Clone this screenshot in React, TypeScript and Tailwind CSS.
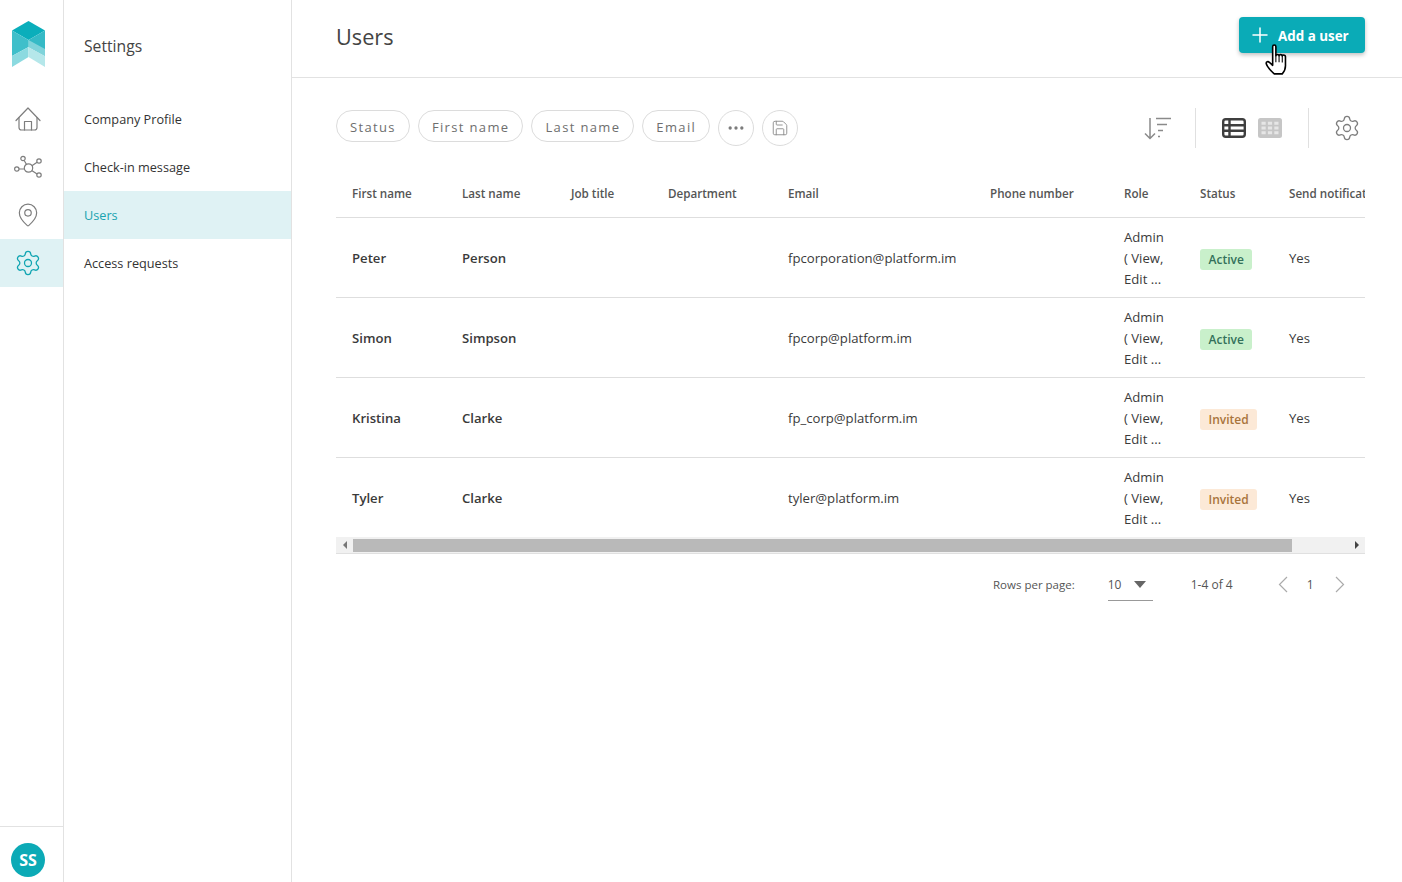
import React from "react";
import { MapPin, Settings, Save, Plus, MoreHorizontal } from "lucide-react";

const columns = [
  { label: "First name", width: "w-[110px]" },
  { label: "Last name", width: "w-[109px]" },
  { label: "Job title", width: "w-[97px]" },
  { label: "Department", width: "w-[120px]" },
  { label: "Email", width: "w-[202px]" },
  { label: "Phone number", width: "w-[134px]" },
  { label: "Role", width: "w-[76px]" },
  { label: "Status", width: "w-[89px]" },
  { label: "Send notification", width: "w-[160px]" },
];

const users = [
  { first: "Peter", last: "Person", email: "fpcorporation@platform.im", status: "Active" },
  { first: "Simon", last: "Simpson", email: "fpcorp@platform.im", status: "Active" },
  { first: "Kristina", last: "Clarke", email: "fp_corp@platform.im", status: "Invited" },
  { first: "Tyler", last: "Clarke", email: "tyler@platform.im", status: "Invited" },
];

const settingsLinks = ["Company Profile", "Check-in message", "Users", "Access requests"];
const filters = ["Status", "First name", "Last name", "Email"];

const Logo = () => (
  <svg width="34" height="47" viewBox="0 0 34 47" className="block">
    <polygon points="16.5,0 33,9.5 16.5,19 0,9.5" fill="#0aaebb" />
    <polygon points="0,9.5 16.5,19 16.5,26 0,35" fill="#3fbfca" />
    <polygon points="33,9.500 16.5,19 16.5,26 33,35" fill="#35bac6" />
    <polygon points="0,35 16.5,26 16.5,36 0,46" fill="#8cdae0" />
    <polygon points="16.5,19 33,28 33,35 16.5,26" fill="#7fd3da" />
    <polygon points="16.5,26 33,35 33,46 16.5,36" fill="#b5e7ea" />
  </svg>
);

const HomeIcon = () => (
  <svg width="26" height="24" viewBox="0 0 26 24" fill="none" stroke="#7d7d7d" strokeWidth="1.2" strokeLinejoin="round" strokeLinecap="round">
    <path d="M1 13.500L13 1l12 12.500" />
    <path d="M4 10.500V20.500a2.500 2.500 0 0 0 2.500 2.500h13a2.500 2.500 0 0 0 2.500-2.500V10.500" />
    <path d="M9.500 23v-8.500h7V23" />
  </svg>
);

const NetworkIcon = () => (
  <svg width="30" height="26" viewBox="0 0 30 26" fill="none" stroke="#7d7d7d" strokeWidth="1.2">
    <circle cx="14.5" cy="13" r="4.2" />
    <circle cx="9" cy="3.500" r="2.200" />
    <circle cx="25" cy="6" r="2.200" />
    <circle cx="2.800" cy="14" r="2.200" />
    <circle cx="25" cy="20" r="2.200" />
    <path d="M10.200 5.500l2.200 3.800M23.100 7.200l-5.200 3.600M5 14h5.300M23.100 19l-5.400-3.600" />
  </svg>
);

const SortIcon = () => (
  <svg width="28" height="23" viewBox="0 0 28 23" fill="none" stroke="#8a8a8a" strokeWidth="1.5">
    <path d="M6 1v20.500M1 16.500L6 21.500l5-5" />
    <path d="M12 1.500h15M13 7.500h10M14 13.500h5M14 19.500h2" />
  </svg>
);

const TableIcon = () => (
  <svg width="24" height="20" viewBox="0 0 24 20" fill="none" stroke="#3f3f3f" strokeWidth="2.400">
    <rect x="1.200" y="1.200" width="21.600" height="17.600" rx="2.500" />
    <path d="M1.200 7.300h21.600M1.200 12.800h21.600M7.500 1.200v17.600" />
  </svg>
);

const GridIcon = () => (
  <svg width="24" height="20" viewBox="0 0 24 20" fill="none">
    <rect width="24" height="20" rx="2.500" fill="#c6c6c6" />
    <path d="M3.500 5.200h4.200M9.900 5.200h4.200M16.300 5.200h4.200M3.500 10h4.200M9.900 10h4.200M16.300 10h4.200M3.500 14.800h4.200M9.900 14.800h4.200M16.300 14.800h4.200" stroke="#e6e6e6" strokeWidth="3" />
  </svg>
);

const Chevron = ({ dir }: { dir: "left" | "right" }) => (
  <svg width="10" height="17" viewBox="0 0 10 17" fill="none" stroke="#ababab" strokeWidth="1.200">
    <path d={dir === "left" ? "M9 1L1.500 8.500 9 16" : "M1 1l7.500 7.500L1 16"} />
  </svg>
);

const HandCursor = () => (
  <svg width="26" height="32" viewBox="0 0 24 30" className="absolute left-[1265px] top-[44px]">
    <path
      d="M7 2.500c0-2 3-2 3 0V11c0-1.600 3-1.600 3 0 0-1.400 3-1.400 3 .3 0-1.300 3-1.300 3 .5v8.700c0 3.500-2 6.500-3 7.500H8.500C6 26 1.500 21 1 18.500c-.4-2 1.800-2.500 3-1.200L7 20z"
      fill="#fff"
      stroke="#000"
      strokeWidth="1.500"
      strokeLinejoin="round"
    />
    <path d="M10 11v6M13 11v6M16 11.300v6" stroke="#000" strokeWidth="1" fill="none" />
  </svg>
);

const StatusBadge = ({ status }: { status: string }) => (
  <span
    className={`inline-block rounded-[3px] px-[8.500px] pt-px text-[12px] font-semibold leading-[20px] ${
      status === "Active" ? "bg-[#c9f0cb] text-[#33705a]" : "bg-[#fce9d7] text-[#a8743c]"
    }`}
  >
    {status}
  </span>
);

export default function App() {
  return (
    <div className="flex h-[882px] w-full overflow-hidden bg-white font-['Open_Sans',sans-serif] text-[#3a3a3a] relative">
      {/* Icon rail */}
      <aside className="flex w-[64px] shrink-0 flex-col border-r border-[#e2e2e2]">
        <div className="flex h-[95px] justify-start pl-[12px] pt-[21px]">
          <Logo />
        </div>
        <nav className="flex flex-col">
          <div className="flex h-[48px] items-center justify-center pr-[7px]">
            <HomeIcon />
          </div>
          <div className="flex h-[48px] items-center justify-center pr-[5px] pt-[2px]">
            <NetworkIcon />
          </div>
          <div className="flex h-[48px] items-center justify-center pr-[7px]">
            <MapPin size={26} strokeWidth={1.1} color="#7d7d7d" />
          </div>
          <div className="flex h-[48px] items-center justify-center bg-[#dff2f4] pr-[7px]">
            <Settings size={28} strokeWidth={1.1} color="#10a5b2" />
          </div>
        </nav>
        <div className="mt-auto flex h-[56px] items-center justify-center border-t border-[#e2e2e2] pr-[7px] pt-[10px]">
          <div className="flex h-[34px] w-[34px] items-center justify-center rounded-full bg-[#0caab6] text-[16px] font-bold text-white">
            SS
          </div>
        </div>
      </aside>

      {/* Settings sidebar */}
      <aside className="flex w-[228px] shrink-0 flex-col border-r border-[#e2e2e2]">
        <div className="flex h-[95px] items-start pl-[20px] pt-[36px] text-[15.700px] leading-[21px] text-[#444]">Settings</div>
        <nav className="flex flex-col">
          {settingsLinks.map((link) => (
            <div
              key={link}
              className={`flex h-[48px] items-center pl-[20px] pt-[2px] text-[12.700px] font-medium ${
                link === "Users" ? "bg-[#dff2f4] text-[#1aa3b0]" : "text-[#333]"
              }`}
            >
              {link}
            </div>
          ))}
        </nav>
      </aside>

      {/* Main */}
      <main className="min-w-0 flex-1">
        <header className="flex h-[78px] items-center justify-between border-b border-[#e2e2e2] pb-[7px] pl-[44px] pr-[37px]">
          <h1 className="mt-[3px] text-[21.700px] font-normal leading-none text-[#444]">Users</h1>
          <button className="flex h-[36px] w-[126px] items-center gap-[6px] rounded-[4px] bg-[#0aabb7] pl-[9px] text-[13.400px] font-bold text-white shadow-[0_2px_4px_rgba(0,0,0,0.25)]">
            <Plus size={24} strokeWidth={1.500} />
            <span className="pt-[2px]">Add a user</span>
          </button>
        </header>

        <div className="pl-[44px] pr-[37px]">
          {/* Filters and view controls */}
          <div className="flex h-[92px] items-start pt-[32px]">
            <div className="flex items-start gap-[8px]">
              {filters.map((filter) => (
                <span
                  key={filter}
                  className="flex h-[32px] items-center rounded-full border border-[#dcdcdc] px-[13px] pt-[3px] text-[13px] font-medium tracking-[1.350px] text-[#6e6e6e]"
                >
                  {filter}
                </span>
              ))}
              <span className="flex h-[36px] w-[36px] items-center justify-center rounded-full border border-[#dcdcdc] text-[#7c7c7c]">
                <MoreHorizontal size={20} strokeWidth={2} />
              </span>
              <span className="flex h-[36px] w-[36px] items-center justify-center rounded-full border border-[#dcdcdc] text-[#8a8a8a]">
                <Save size={18} strokeWidth={1.200} />
              </span>
            </div>
            <div className="ml-auto -mt-[2px] flex items-center">
              <SortIcon />
              <div className="ml-[23px] h-[40px] w-px bg-[#e0e0e0]" />
              <div className="ml-[26px]">
                <TableIcon />
              </div>
              <div className="ml-[12px]">
                <GridIcon />
              </div>
              <div className="ml-[26px] h-[40px] w-px bg-[#e0e0e0]" />
              <div className="ml-[24px] mr-[4px] text-[#7d7d7d]">
                <Settings size={28} strokeWidth={1.100} />
              </div>
            </div>
          </div>

          {/* Users table */}
          <div className="overflow-hidden">
            <table className="w-[1097px] table-fixed border-collapse text-left">
              <thead>
                <tr className="h-[47px] border-b border-[#dedede]">
                  {columns.map((col) => (
                    <th key={col.label} className={`${col.width} whitespace-nowrap pl-[16px] pt-px text-[11.650px] font-semibold text-[#555]`}>
                      {col.label}
                    </th>
                  ))}
                </tr>
              </thead>
              <tbody>
                {users.map((user, i) => (
                  <tr key={user.email} className={`h-[80px] text-[13.150px] ${i < users.length - 1 ? "border-b border-[#dedede]" : ""}`}>
                    <td className="pl-[16px] pt-[3px] font-semibold text-[#3a3a3a]">{user.first}</td>
                    <td className="pl-[16px] pt-[3px] font-semibold text-[#3a3a3a]">{user.last}</td>
                    <td />
                    <td />
                    <td className="pl-[16px] pt-[3px]">{user.email}</td>
                    <td />
                    <td className="pl-[16px] pt-[2px] leading-[21px]">
                      Admin
                      <br />( View,
                      <br />
                      Edit ...
                    </td>
                    <td className="pl-[16px] pt-[4px]">
                      <StatusBadge status={user.status} />
                    </td>
                    <td className="pl-[16px] pt-[3px]">Yes</td>
                  </tr>
                ))}
              </tbody>
            </table>
          </div>

          {/* Horizontal scrollbar */}
          <div className="flex h-[17px] items-center border-b border-[#e0e0e0] bg-[#f1f1f1]">
            <div className="flex w-[17px] justify-center">
              <div className="h-0 w-0 border-y-[4px] border-r-[4px] border-y-transparent border-r-[#777]" />
            </div>
            <div className="h-[13px] w-[939px] bg-[#b9b9b9]" />
            <div className="ml-auto flex w-[17px] justify-center">
              <div className="h-0 w-0 border-y-[4px] border-l-[4px] border-y-transparent border-l-[#444]" />
            </div>
          </div>

          {/* Pagination */}
          <div className="flex h-[60px] items-start pt-[21px] text-[12px] text-[#555]">
            <span className="ml-[657px] text-[11.500px] leading-[20px]">Rows per page:</span>
            <div className="ml-[33px] flex h-[26px] w-[45px] items-start border-b border-[#999] leading-[20px]">
              <span>10</span>
              <div className="ml-[13px] mt-[6px] h-0 w-0 border-x-[6.500px] border-t-[7px] border-x-transparent border-t-[#666]" />
            </div>
            <span className="ml-[38px] leading-[20px]">1-4 of 4</span>
            <div className="ml-[45px] mt-[1px]">
              <Chevron dir="left" />
            </div>
            <span className="ml-[19px] leading-[20px]">1</span>
            <div className="ml-[21px] mt-[1px]">
              <Chevron dir="right" />
            </div>
          </div>
        </div>
      </main>

      <HandCursor />
    </div>
  );
}
